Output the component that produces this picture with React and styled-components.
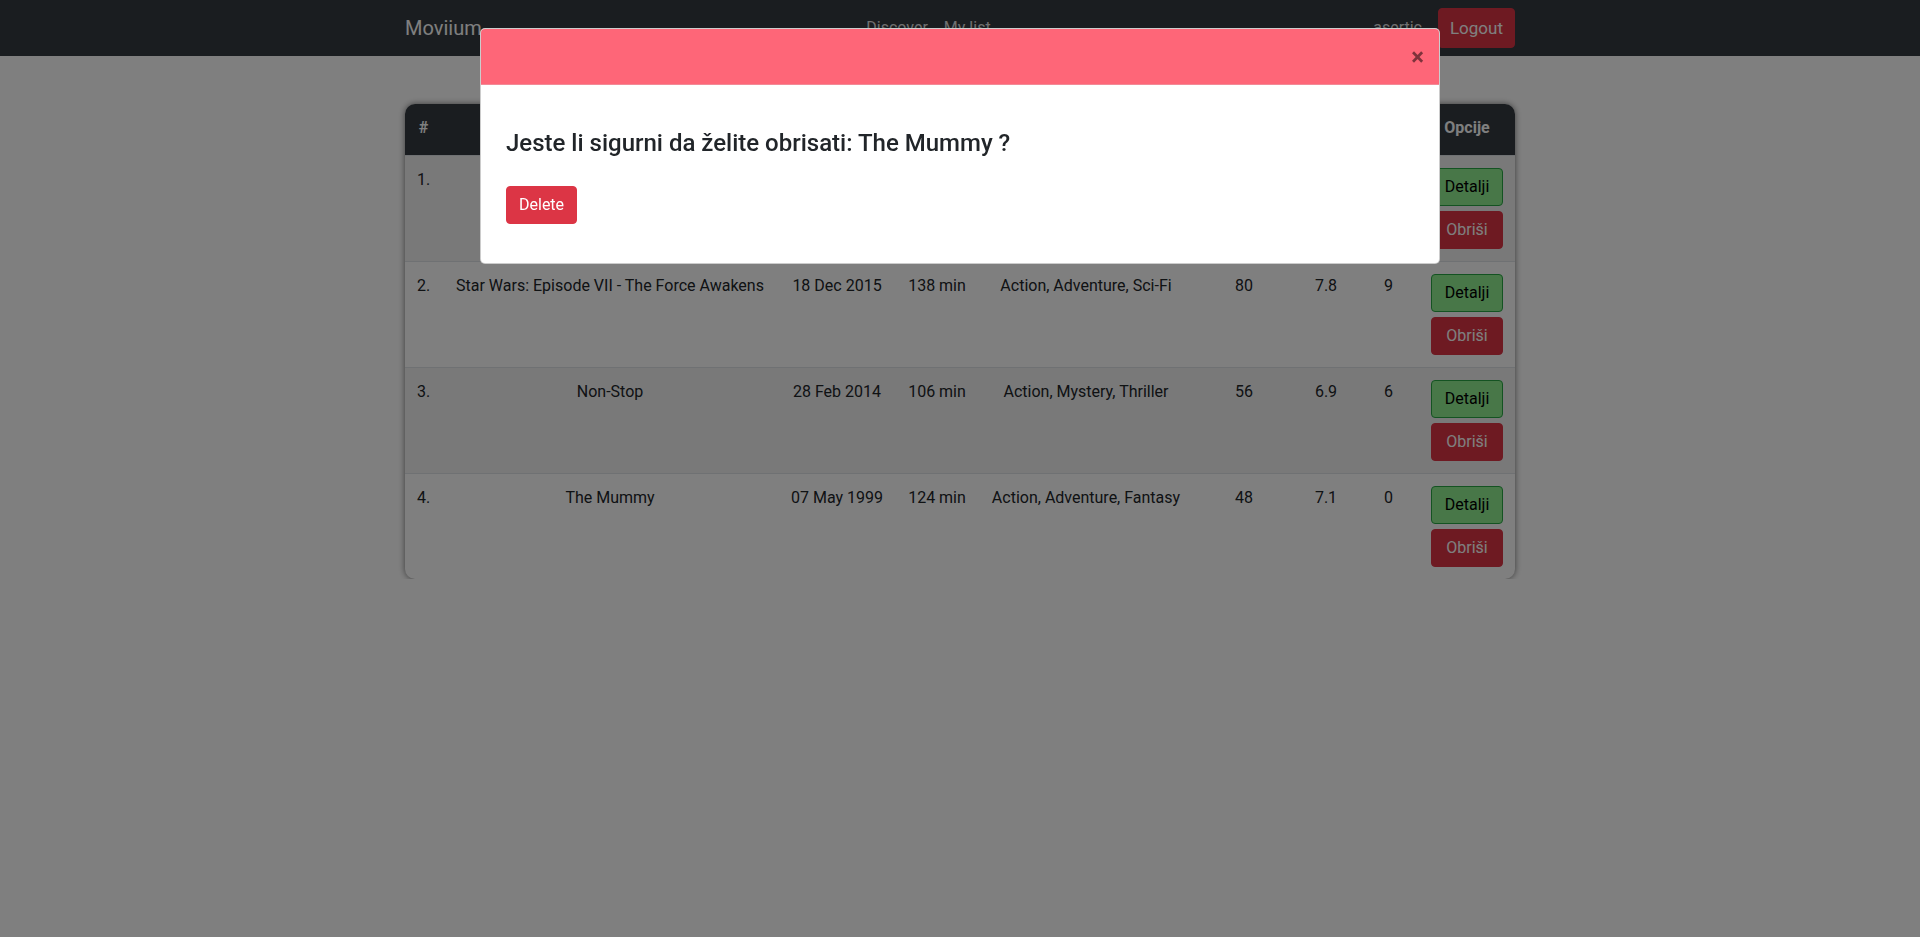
import React from "react";
import styled, { createGlobalStyle } from "styled-components";

const GlobalStyle = createGlobalStyle`
  * { box-sizing: border-box; }
  html, body { margin: 0; padding: 0; }
  body {
    font-family: Roboto, "Liberation Sans", Arial, sans-serif;
    font-size: 16px;
    line-height: 1.5;
    color: #212529;
    background: #fff;
    overflow: hidden;
  }
`;

const Navbar = styled.nav`
  background: #343a40;
  height: 56px;
  padding: 8px 0;
`;

const Container = styled.div`
  width: 1140px;
  margin: 0 auto;
  padding: 0 15px;
`;

const NavInner = styled(Container)`
  display: flex;
  align-items: center;
  height: 40px;
`;

const Brand = styled.a`
  font-size: 20px;
  line-height: 30px;
  color: #fff;
  margin-right: 10px;
  text-decoration: none;
`;

const NavLinks = styled.div`
  display: flex;
  margin: 0 auto;
`;

const NavLink = styled.a`
  padding: 8px;
  line-height: 24px;
  color: rgba(255, 255, 255, 0.85);
  text-decoration: none;
`;

const RightGroup = styled.div`
  display: flex;
  align-items: center;
  gap: 8px;
`;

const Btn = styled.button`
  font-family: inherit;
  font-size: 16px;
  line-height: 24px;
  padding: 6px 12px;
  border-radius: 4px;
  border: 1px solid transparent;
  cursor: pointer;
`;

const DangerBtn = styled(Btn)`
  background: #dc3545;
  border-color: #dc3545;
  color: #fff;
`;

const LogoutBtn = styled(DangerBtn)`
  font-size: 17px;
  padding: 7px 11px;
`;

const Main = styled(Container)`
  padding-top: 48px;
`;

const TableCard = styled.div`
  border-radius: 10px;
  overflow: hidden;
  box-shadow: 0 0 6px rgba(0, 0, 0, 0.55);
`;

const Table = styled.table`
  width: 100%;
  border-collapse: separate;
  border-spacing: 0;
  table-layout: fixed;
  text-align: center;
`;

const Th = styled.th`
  background: #343a40;
  color: #fff;
  font-weight: 700;
  padding: 12px 12px 13px;
  line-height: 24px;
  border-bottom: 2px solid #343a40;
  white-space: nowrap;
  overflow: hidden;
`;

const Tr = styled.tr`
  &:nth-child(odd) {
    background: rgba(0, 0, 0, 0.05);
  }
`;

const Td = styled.td`
  padding: 12px;
  vertical-align: top;
  border-top: 1px solid #dee2e6;
  line-height: 24px;
  white-space: nowrap;
`;

const ActionStack = styled.div`
  display: flex;
  flex-direction: column;
  gap: 5px;
`;

const DetailsBtn = styled(Btn)`
  background: #90ee90;
  border-color: #28a745;
  color: #000;
  width: 100%;
`;

const RowDeleteBtn = styled(DangerBtn)`
  width: 100%;
`;

const Backdrop = styled.div`
  position: fixed;
  inset: 0;
  background: rgba(0, 0, 0, 0.5);
`;

const ModalWrap = styled.div`
  position: fixed;
  inset: 0;
  padding-top: 28px;
`;

const Dialog = styled.div`
  width: 960px;
  margin: 0 auto;
  background: #fff;
  border: 1px solid rgba(0, 0, 0, 0.2);
  border-radius: 5px;
  overflow: hidden;
`;

const ModalHeader = styled.div`
  background: #fe6678;
  height: 56px;
  border-bottom: 1px solid #f28a97;
  display: flex;
  align-items: center;
  justify-content: flex-end;
  padding: 0 15px;
`;

const Close = styled.button`
  background: transparent;
  border: 0;
  padding: 0;
  font-family: inherit;
  font-size: 24px;
  font-weight: 700;
  line-height: 1;
  color: #000;
  opacity: 0.5;
  cursor: pointer;
`;

const ModalBody = styled.div`
  padding: 44px 25px 39px;
`;

const Question = styled.h4`
  margin: 0 0 28px;
  font-size: 24px;
  font-weight: 500;
  line-height: 1.2;
  color: #212529;
`;

const columns = [37, 336, 118, 82, 216, 100, 64, 61, 96];
const headers = ["#", "Naslov", "Datum", "Trajanje", "Žanr", "Metascore", "IMDB", "Ocjena", "Opcije"];

const movies = [
  ["Inception", "16 Jul 2010", "148 min", "Action, Adventure, Sci-Fi", "74", "8.8", "10"],
  ["Star Wars: Episode VII - The Force Awakens", "18 Dec 2015", "138 min", "Action, Adventure, Sci-Fi", "80", "7.8", "9"],
  ["Non-Stop", "28 Feb 2014", "106 min", "Action, Mystery, Thriller", "56", "6.9", "6"],
  ["The Mummy", "07 May 1999", "124 min", "Action, Adventure, Fantasy", "48", "7.1", "0"],
];

export default function App() {
  return (
    <>
      <GlobalStyle />
      <Navbar>
        <NavInner>
          <Brand>Moviium</Brand>
          <NavLinks>
            <NavLink>Discover</NavLink>
            <NavLink>My list</NavLink>
          </NavLinks>
          <RightGroup>
            <NavLink>asertic</NavLink>
            <LogoutBtn>Logout</LogoutBtn>
          </RightGroup>
        </NavInner>
      </Navbar>
      <Main>
        <TableCard>
          <Table>
            <colgroup>
              {columns.map((w, i) => (
                <col key={i} style={{ width: w }} />
              ))}
            </colgroup>
            <thead>
              <tr>
                {headers.map((h) => (
                  <Th key={h}>{h}</Th>
                ))}
              </tr>
            </thead>
            <tbody>
              {movies.map((m, i) => (
                <Tr key={i}>
                  <Td>{i + 1}.</Td>
                  {m.map((v, j) => (
                    <Td key={j}>{v}</Td>
                  ))}
                  <Td>
                    <ActionStack>
                      <DetailsBtn>Detalji</DetailsBtn>
                      <RowDeleteBtn>Obriši</RowDeleteBtn>
                    </ActionStack>
                  </Td>
                </Tr>
              ))}
            </tbody>
          </Table>
        </TableCard>
      </Main>
      <Backdrop />
      <ModalWrap>
        <Dialog>
          <ModalHeader>
            <Close aria-label="Close">×</Close>
          </ModalHeader>
          <ModalBody>
            <Question>Jeste li sigurni da želite obrisati: The Mummy ?</Question>
            <DangerBtn>Delete</DangerBtn>
          </ModalBody>
        </Dialog>
      </ModalWrap>
    </>
  );
}
